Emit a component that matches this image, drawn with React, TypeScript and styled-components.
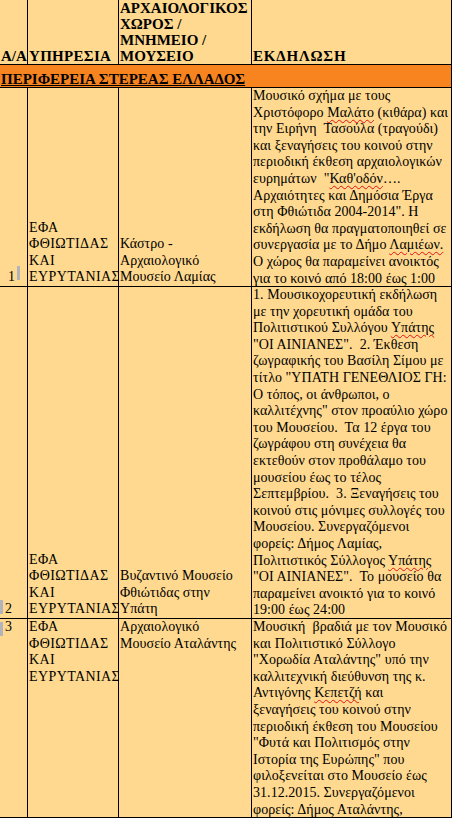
import { createGlobalStyle, styled } from 'styled-components';

const GlobalStyle = createGlobalStyle`
  html, body {
    margin: 0;
    padding: 0;
    background: #ffffff;
  }
  body {
    width: 454px;
    height: 818px;
    overflow: hidden;
  }
`;

const Sheet = styled.div`
  display: grid;
  grid-template-columns: 28px 91px 133px 200px;
  grid-template-rows: 65px 23px 199px 332px 199px;
  width: 452px;
  background: #ffd98f;
  font-family: 'Liberation Serif', 'Times New Roman', serif;
  font-size: 14px;
  line-height: 16.6px;
  color: #000;
`;

const Cell = styled.div<{ $valign?: 'top' | 'bottom'; $span?: boolean; $fill?: string }>`
  display: flex;
  flex-direction: column;
  justify-content: ${(p) => (p.$valign === 'bottom' ? 'flex-end' : 'flex-start')};
  grid-column: ${(p) => (p.$span ? '1 / -1' : 'auto')};
  background: ${(p) => p.$fill || 'transparent'};
  border-right: 1px solid #000;
  border-bottom: 1px solid #000;
  padding-left: 1px;
  overflow: hidden;
`;

const Text = styled.div<{ $bold?: boolean; $underline?: boolean; $track?: number }>`
  white-space: pre;
  font-size: ${(p) => (p.$bold ? '15px' : '14px')};
  line-height: ${(p) => (p.$bold ? '16px' : '16.6px')};
  font-weight: ${(p) => (p.$bold ? 700 : 400)};
  letter-spacing: ${(p) => (p.$track !== undefined ? p.$track : p.$bold ? 0 : 0.05)}px;
  text-decoration: ${(p) => (p.$underline ? 'underline' : 'none')};
  text-underline-offset: 1px;
`;

const Typo = styled.span`
  text-decoration: underline wavy #e01010;
  text-decoration-thickness: 1px;
  text-underline-offset: 2px;
`;

const NumRow = styled.div<{ $end?: boolean }>`
  display: flex;
  align-items: flex-end;
  justify-content: ${(p) => (p.$end ? 'flex-end' : 'flex-start')};
  gap: 2px;
  padding-right: ${(p) => (p.$end ? '7px' : '0')};
  margin-left: -1px;
`;

const Marker = styled.span<{ $lift?: number }>`
  display: inline-block;
  width: 3px;
  height: 14px;
  margin-bottom: ${(p) => p.$lift || 0}px;
  background: #b3b3bb;
`;

const SERVICE = 'ΕΦΑ\nΦΘΙΩΤΙΔΑΣ\nΚΑΙ\nΕΥΡΥΤΑΝΙΑΣ';

const App = () => {
  return (
    <>
      <GlobalStyle />
      <Sheet>
        <Cell $valign="bottom">
          <Text $bold>Α/Α</Text>
        </Cell>
        <Cell $valign="bottom">
          <Text $bold $track={0.3}>
            ΥΠΗΡΕΣΙΑ
          </Text>
        </Cell>
        <Cell $valign="bottom">
          <Text $bold>{'ΑΡΧΑΙΟΛΟΓΙΚΟΣ\nΧΩΡΟΣ /\nΜΝΗΜΕΙΟ /\nΜΟΥΣΕΙΟ'}</Text>
        </Cell>
        <Cell $valign="bottom">
          <Text $bold $track={0.8}>
            ΕΚΔΗΛΩΣΗ
          </Text>
        </Cell>

        <Cell $valign="bottom" $span $fill="#f7841f">
          <Text $bold $underline>
            ΠΕΡΙΦΕΡΕΙΑ ΣΤΕΡΕΑΣ ΕΛΛΑΔΟΣ
          </Text>
        </Cell>

        <Cell $valign="bottom">
          <NumRow $end>
            <Text>1</Text>
            <Marker $lift={6} />
          </NumRow>
        </Cell>
        <Cell $valign="bottom">
          <Text $track={0.4}>{SERVICE}</Text>
        </Cell>
        <Cell $valign="bottom">
          <Text>{'Κάστρο -\nΑρχαιολογικό\nΜουσείο Λαμίας'}</Text>
        </Cell>
        <Cell>
          <Text>
            {'Μουσικό σχήμα με τους\nΧριστόφορο '}
            <Typo>Μαλάτο</Typo>
            {' (κιθάρα) και\nτην Ειρήνη  Τασούλα (τραγούδι)\nκαι ξεναγήσεις του κοινού στην\nπεριοδική έκθεση αρχαιολογικών\nευρημάτων  "'}
            <Typo>Καθ'οδόν</Typo>
            {'….\nΑρχαιότητες και Δημόσια Έργα\nστη Φθιώτιδα 2004-2014". Η\nεκδήλωση θα πραγματοποιηθεί σε\nσυνεργασία με το Δήμο '}
            <Typo>Λαμιέων.</Typo>
            {'\nΟ χώρος θα παραμείνει ανοικτός\nγια το κοινό από 18:00 έως 1:00'}
          </Text>
        </Cell>

        <Cell $valign="bottom">
          <NumRow>
            <Marker $lift={4} />
            <Text>2</Text>
          </NumRow>
        </Cell>
        <Cell $valign="bottom">
          <Text $track={0.4}>{SERVICE}</Text>
        </Cell>
        <Cell $valign="bottom">
          <Text>{'Βυζαντινό Μουσείο\nΦθιώτιδας στην\nΥπάτη'}</Text>
        </Cell>
        <Cell>
          <Text>
            {'1. Μουσικοχορευτική εκδήλωση\nμε την χορευτική ομάδα του\nΠολιτιστικού Συλλόγου '}
            <Typo>Υπάτης</Typo>
            {'\n"ΟΙ ΑΙΝΙΑΝΕΣ".  2. Έκθεση\nζωγραφικής του Βασίλη Σίμου με\nτίτλο "ΥΠΑΤΗ ΓΕΝΕΘΛΙΟΣ ΓΗ:\nΟ τόπος, οι άνθρωποι, ο\nκαλλιτέχνης" στον προαύλιο χώρο\nτου Μουσείου.  Τα 12 έργα του\nζωγράφου στη συνέχεια θα\nεκτεθούν στον προθάλαμο του\nμουσείου έως το τέλος\nΣεπτεμβρίου.  3. Ξεναγήσεις του\nκοινού στις μόνιμες συλλογές του\nΜουσείου. Συνεργαζόμενοι\nφορείς: Δήμος Λαμίας,\nΠολιτιστικός Σύλλογος '}
            <Typo>Υπάτης</Typo>
            {'\n"ΟΙ ΑΙΝΙΑΝΕΣ".  Το μουσείο θα\nπαραμείνει ανοικτό για το κοινό\n19:00 έως 24:00'}
          </Text>
        </Cell>

        <Cell>
          <NumRow>
            <Marker />
            <Text>3</Text>
          </NumRow>
        </Cell>
        <Cell>
          <Text $track={0.4}>{SERVICE}</Text>
        </Cell>
        <Cell>
          <Text>{'Αρχαιολογικό\nΜουσείο Αταλάντης'}</Text>
        </Cell>
        <Cell>
          <Text>
            {'Μουσική  βραδιά με τον Μουσικό\nκαι Πολιτιστικό Σύλλογο\n"Χορωδία Αταλάντης" υπό την\nκαλλιτεχνική διεύθυνση της κ.\nΑντιγόνης '}
            <Typo>Κεπετζή</Typo>
            {' και\nξεναγήσεις του κοινού στην\nπεριοδική έκθεση του Μουσείου\n"Φυτά και Πολιτισμός στην\nΙστορία της Ευρώπης" που\nφιλοξενείται στο Μουσείο έως\n31.12.2015. Συνεργαζόμενοι\nφορείς: Δήμος Αταλάντης,'}
          </Text>
        </Cell>
      </Sheet>
    </>
  );
};

export default App;
